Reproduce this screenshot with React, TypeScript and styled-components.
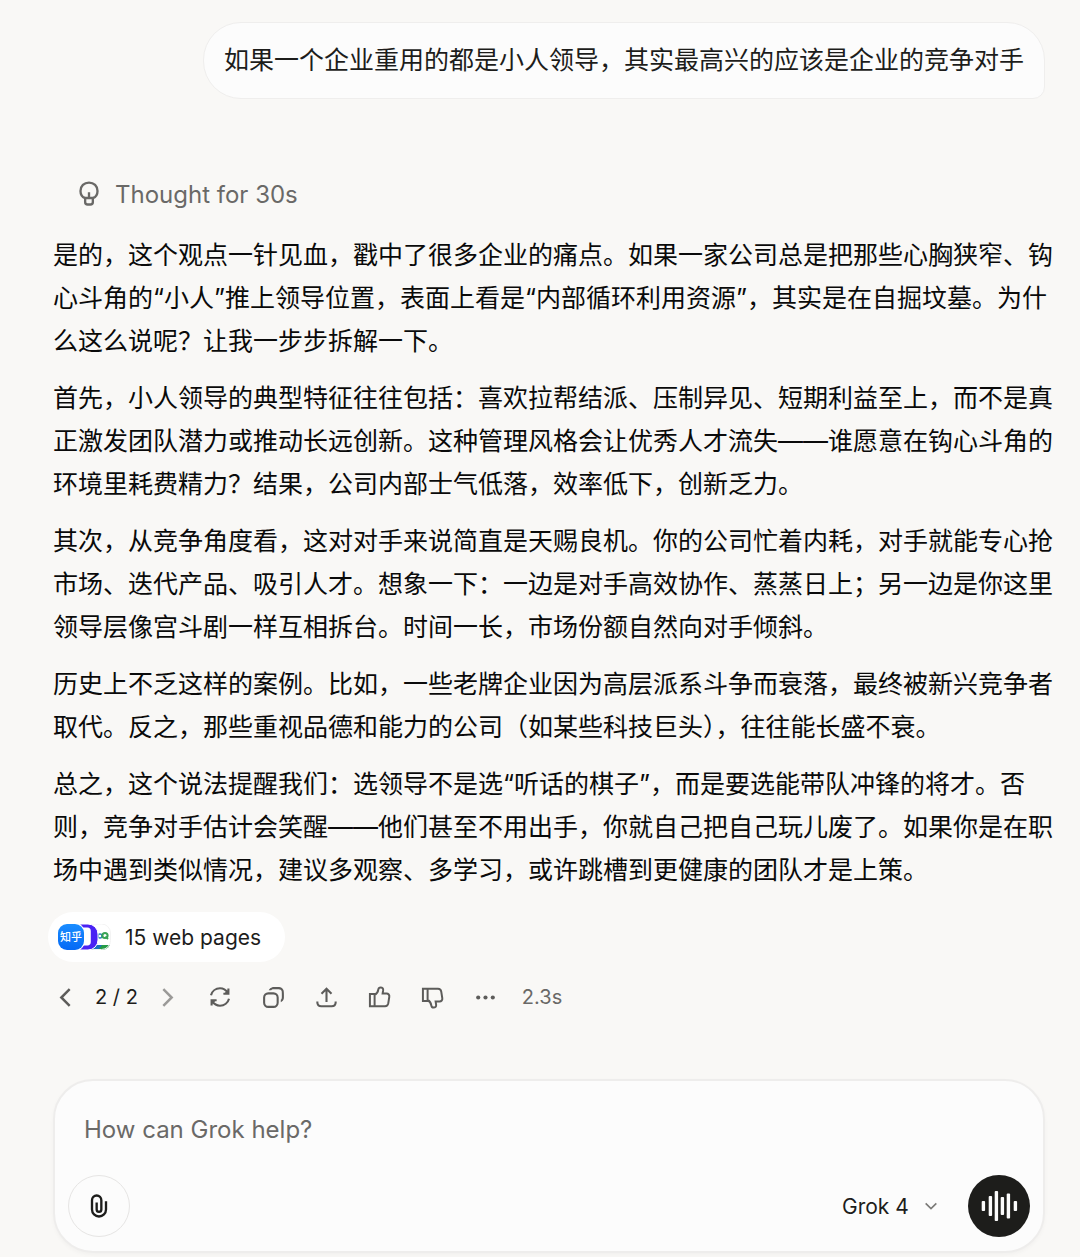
import React from "react";
import styled, { createGlobalStyle } from "styled-components";

const GlobalStyle = createGlobalStyle`
  *, *::before, *::after { box-sizing: border-box; }
  body {
    margin: 0;
    background: #f9f8f6;
    color: #0a0a0a;
    font-family: Inter, "Noto Sans CJK SC", sans-serif;
  }
  button, input, select { font: inherit; color: inherit; }
`;

const Page = styled.main`
  display: flex;
  flex-direction: column;
  padding: 22px 24px 4px 53px;
`;

const UserRow = styled.div`
  display: flex;
  justify-content: flex-end;
  padding-right: 11px;
`;

const Bubble = styled.p`
  margin: 0;
  padding: 16px 20px;
  border: 1px solid #efeeed;
  border-radius: 38px 38px 12px 38px;
  background: #fcfcfc;
  color: #1d1d1b;
  font-size: 25px;
  line-height: 43px;
`;

const Thought = styled.button`
  display: flex;
  align-items: center;
  align-self: flex-start;
  gap: 12px;
  margin-top: 71px;
  padding: 0 0 0 22px;
  height: 48px;
  border: 0;
  background: none;
  color: #6a6967;
  font-size: 24px;
`;

const Answer = styled.article`
  display: flex;
  flex-direction: column;
  gap: 14px;
  margin-top: 16px;
  font-size: 25px;
  line-height: 43px;
  p { margin: 0; }
`;

const Sources = styled.button`
  display: flex;
  align-items: center;
  align-self: flex-start;
  gap: 14px;
  height: 50px;
  margin: 20px 0 0 -5px;
  padding: 0 24px 0 10px;
  border: 0;
  border-radius: 25px;
  background: #fff;
  color: #1d1d1b;
  font-size: 21px;
`;

const Actions = styled.div`
  display: flex;
  align-items: center;
  height: 50px;
  margin: 10px 0 0 -5px;
  font-size: 20px;
  color: #6a6967;
`;

const Pager = styled.nav`
  display: flex;
  align-items: center;
  gap: 13px;
  margin-right: 11px;
  color: #1d1d1b;
`;

const IconButton = styled.button<{ $narrow?: boolean; $faded?: boolean }>`
  display: flex;
  align-items: center;
  justify-content: center;
  width: ${(p) => (p.$narrow ? 34 : 49)}px;
  height: 49px;
  margin-right: ${(p) => (p.$narrow ? 0 : 4)}px;
  padding: 0;
  border: 0;
  background: none;
  color: #5d5c5a;
  opacity: ${(p) => (p.$faded ? 0.6 : 1)};
`;

const Elapsed = styled.span`
  margin-left: 8px;
`;

const Composer = styled.form`
  display: flex;
  flex-direction: column;
  margin: 57px 11px 0 0;
  padding: 22px 13px 14px;
  border: 2px solid #eeedec;
  border-radius: 40px;
  background: #fcfcfc;
  box-shadow: 0 2px 4px rgba(0, 0, 0, 0.03);
`;

const Prompt = styled.input`
  height: 52px;
  padding: 0 16px;
  border: 0;
  outline: 0;
  background: none;
  font-size: 24px;
  &::placeholder { color: #6a6967; opacity: 1; }
`;

const Tools = styled.div`
  display: flex;
  align-items: center;
  justify-content: space-between;
  margin-top: 20px;
`;

const ToolGroup = styled.div`
  display: flex;
  align-items: center;
  gap: 29px;
`;

const RoundButton = styled.button<{ $solid?: boolean }>`
  display: flex;
  align-items: center;
  justify-content: center;
  width: 62px;
  height: 62px;
  padding: 0;
  border: ${(p) => (p.$solid ? "0" : "1px solid #e6e5e4")};
  border-radius: 50%;
  background: ${(p) => (p.$solid ? "#1d1d1b" : "transparent")};
  color: ${(p) => (p.$solid ? "#fcfcfc" : "#1d1d1b")};
`;

const ModelPicker = styled.label`
  display: flex;
  align-items: center;
  gap: 14px;
  color: #7b7a78;
`;

const ModelSelect = styled.select`
  appearance: none;
  padding: 0;
  border: 0;
  outline: 0;
  background: none;
  color: #1d1d1b;
  font-size: 21px;
`;

type IconProps = { size?: number; width?: number; flip?: boolean; children: React.ReactNode };

const Icon = ({ size = 25, width = 2, flip, children }: IconProps) => (
  <svg
    width={size}
    height={size}
    viewBox="0 0 24 24"
    fill="none"
    stroke="currentColor"
    strokeWidth={width}
    transform={flip ? "scale(1 -1)" : undefined}
    aria-hidden="true"
  >
    {children}
  </svg>
);

const Bulb = () => (
  <Icon size={28}>
    <path d="M8.6 15.6C6.2 14.6 4.7 12.4 4.7 9.4C4.7 5.2 7.8 2.2 12 2.2C16.2 2.2 19.3 5.2 19.3 9.4C19.3 12.4 17.8 14.6 15.4 15.6" />
    <path d="M8.7 15.4H15.3V18.8C15.3 20.3 14.5 21 13.2 21H10.8C9.5 21 8.7 20.3 8.7 18.8V15.4ZM12 10.4V15.4" />
  </Icon>
);

const Refresh = () => (
  <Icon size={24} width={2.1}>
    <path d="M3 10.2C4 6.2 7.7 3.3 12 3.3C15.2 3.3 18 5 19.6 7.6" />
    <path d="M21 13.8C20 17.8 16.3 20.7 12 20.7C8.8 20.7 6 19 4.4 16.4" />
    <path d="M20.4 3.6V8.8H15.4M3.6 20.4V15.2H8.6" />
    <path d="M21 4L15.5 9H21ZM3 20L8.5 15H3Z" fill="currentColor" stroke="none" />
  </Icon>
);

const Copy = () => (
  <Icon>
    <rect x="3" y="8" width="13" height="13" rx="4" />
    <path
      fill="currentColor"
      stroke="none"
      d="M13 2C11.5 2 11.1 2 11 2.1C9.4 2.4 8.1 3.5 7.4 5H9.8C10.2 4.5 10.8 4.2 11.4 4.1C11.7 4 12 4 13 4H14.6C16.8 4 17.8 4.1 18.4 4.3C18.9 4.6 19.4 5.1 19.7 5.6C20 6.3 20 7.3 20 9.4V11C20 12 20 12.3 19.9 12.6C19.8 13.2 19.5 13.8 19 14.2V16.6C20.5 15.9 21.6 14.6 21.9 13C22 12.5 22 11.9 22 11V9.4C22 7 21.9 5.7 21.5 4.7C21 3.8 20.2 3 19.3 2.5C18.3 2.1 17 2 14.6 2H13Z"
    />
  </Icon>
);

const Share = () => (
  <Icon>
    <path d="M12 16.4V3.8M7.2 8.4L12 3.6L16.8 8.4" />
    <path d="M3.2 15.8V16.6C3.2 18.8 4.8 20.4 7 20.4H17C19.2 20.4 20.8 18.8 20.8 16.6V15.8" />
  </Icon>
);

const Thumb = ({ down }: { down?: boolean }) => (
  <Icon flip={down} width={1.9}>
    <path d="M7.3 9.6C9.6 8.4 10.6 6.4 10.9 4.2C11.1 2.9 12 2.3 13.1 2.3C14.7 2.3 15.7 3.5 15.5 5L15 8.2H18.8C20.5 8.2 21.7 9.6 21.4 11.3L20.4 17.7C20.1 19.3 18.9 20.4 17.3 20.4H2.8V8.6H7.3V20.4" />
  </Icon>
);

const Clip = () => (
  <Icon size={28}>
    <path d="M10 9V15C10 16.1 10.9 17 12 17C13.1 17 14 16.1 14 15V7C14 4.8 12.2 3 10 3C7.8 3 6 4.8 6 7V15C6 18.3 8.7 21 12 21C15.3 21 18 18.3 18 15V8" />
  </Icon>
);

const bars = [
  [2, 10],
  [9, 20],
  [15, 30],
  [21, 18],
  [27, 25],
  [34, 10],
];

const Wave = () => (
  <svg width="38" height="32" viewBox="0 0 38 32" aria-hidden="true">
    {bars.map(([x, h]) => (
      <rect key={x} x={x - 0.3} y={16 - h / 2} width="3.4" height={h} rx="1" fill="currentColor" />
    ))}
  </svg>
);

const SiteIcons = () => (
  <svg width="53" height="26" viewBox="0 0 53 26" aria-hidden="true">
    <defs>
      <linearGradient id="zhihu" x1="0" y1="0" x2="0" y2="1">
        <stop offset="0" stopColor="#1a8dff" />
        <stop offset="1" stopColor="#0569f5" />
      </linearGradient>
      <clipPath id="third"><rect x="27" y="0" width="26" height="26" rx="9" /></clipPath>
    </defs>
    <g clipPath="url(#third)">
      <rect x="27" width="26" height="26" fill="#fff" />
      <rect x="27" y="21" width="26" height="5" fill="#259b45" />
      <path d="M27 21H44L40 26H27Z" fill="#1a6fc0" />
      <circle cx="42" cy="12" r="2" fill="none" stroke="#2f86b8" strokeWidth="1.6" />
      <circle cx="47" cy="11.5" r="2.6" fill="none" stroke="#38a355" strokeWidth="2" />
      <path d="M47.5 12.5L50 15" stroke="#38a355" strokeWidth="1.8" />
    </g>
    <rect x="27" y="0" width="25.5" height="25.5" rx="9" fill="none" stroke="#f3f3f3" />
    <rect x="13" y="0" width="27" height="26" rx="10" fill="#4a22f4" stroke="#fff" />
    <path d="M24 3.5H29.5C31.5 3.5 32.8 5 32.8 7V18C32.8 20 31.5 21.5 29.5 21.5H24Z" fill="#fff" />
    <rect x="-1" y="-1" width="28" height="28" rx="10" fill="#fff" />
    <rect x="0" y="0" width="26" height="26" rx="9" fill="url(#zhihu)" />
    <text x="13" y="17" textAnchor="middle" fontSize="11" fontWeight="500" fill="#fff" fontFamily="Noto Sans CJK SC, sans-serif">
      知乎
    </text>
  </svg>
);

const paragraphs = [
  "是的，这个观点一针见血，戳中了很多企业的痛点。如果一家公司总是把那些心胸狭窄、钩心斗角的“小人”推上领导位置，表面上看是“内部循环利用资源”，其实是在自掘坟墓。为什么这么说呢？让我一步步拆解一下。",
  "首先，小人领导的典型特征往往包括：喜欢拉帮结派、压制异见、短期利益至上，而不是真正激发团队潜力或推动长远创新。这种管理风格会让优秀人才流失——谁愿意在钩心斗角的环境里耗费精力？结果，公司内部士气低落，效率低下，创新乏力。",
  "其次，从竞争角度看，这对对手来说简直是天赐良机。你的公司忙着内耗，对手就能专心抢市场、迭代产品、吸引人才。想象一下：一边是对手高效协作、蒸蒸日上；另一边是你这里领导层像宫斗剧一样互相拆台。时间一长，市场份额自然向对手倾斜。",
  "历史上不乏这样的案例。比如，一些老牌企业因为高层派系斗争而衰落，最终被新兴竞争者取代。反之，那些重视品德和能力的公司（如某些科技巨头），往往能长盛不衰。",
  "总之，这个说法提醒我们：选领导不是选“听话的棋子”，而是要选能带队冲锋的将才。否则，竞争对手估计会笑醒——他们甚至不用出手，你就自己把自己玩儿废了。如果你是在职场中遇到类似情况，建议多观察、多学习，或许跳槽到更健康的团队才是上策。",
];

export default function App() {
  return (
    <>
      <GlobalStyle />
      <Page lang="zh-CN">
        <UserRow>
          <Bubble>如果一个企业重用的都是小人领导，其实最高兴的应该是企业的竞争对手</Bubble>
        </UserRow>

        <Thought type="button">
          <Bulb />
          Thought for 30s
        </Thought>

        <Answer>
          {paragraphs.map((text) => (
            <p key={text}>{text}</p>
          ))}
        </Answer>

        <Sources type="button">
          <SiteIcons />
          15 web pages
        </Sources>

        <Actions>
          <Pager aria-label="Responses">
            <IconButton $narrow type="button" aria-label="Previous response">
              <Icon width={2.4}><path d="M16 4L8 12L16 20" /></Icon>
            </IconButton>
            <span>2 / 2</span>
            <IconButton $narrow $faded type="button" aria-label="Next response">
              <Icon width={2.4}><path d="M8 4L16 12L8 20" /></Icon>
            </IconButton>
          </Pager>
          <IconButton type="button" aria-label="Regenerate"><Refresh /></IconButton>
          <IconButton type="button" aria-label="Copy"><Copy /></IconButton>
          <IconButton type="button" aria-label="Share"><Share /></IconButton>
          <IconButton type="button" aria-label="Like"><Thumb /></IconButton>
          <IconButton type="button" aria-label="Dislike"><Thumb down /></IconButton>
          <IconButton type="button" aria-label="More">
            <Icon>
              <g fill="currentColor" stroke="none">
                <circle cx="5" cy="12" r="2" />
                <circle cx="12" cy="12" r="2" />
                <circle cx="19" cy="12" r="2" />
              </g>
            </Icon>
          </IconButton>
          <Elapsed>2.3s</Elapsed>
        </Actions>

        <Composer onSubmit={(e) => e.preventDefault()}>
          <Prompt aria-label="Prompt" placeholder="How can Grok help?" />
          <Tools>
            <RoundButton type="button" aria-label="Attach"><Clip /></RoundButton>
            <ToolGroup>
              <ModelPicker>
                <ModelSelect aria-label="Model" defaultValue="Grok 4">
                  <option>Grok 4</option>
                </ModelSelect>
                <Icon size={16} width={2.4}><path d="M4 8L12 16L20 8" /></Icon>
              </ModelPicker>
              <RoundButton $solid type="button" aria-label="Voice mode"><Wave /></RoundButton>
            </ToolGroup>
          </Tools>
        </Composer>
      </Page>
    </>
  );
}
